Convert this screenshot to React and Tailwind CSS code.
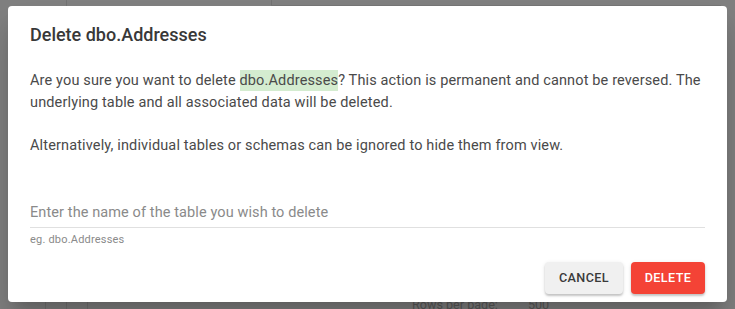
const font = { fontFamily: "Roboto, 'Liberation Sans', sans-serif" };

const Backdrop = () => (
  <div className="absolute inset-0">
    <div className="absolute left-[66px] top-0 h-[6px] w-px bg-[#737373]" />
    <div className="absolute left-[271px] top-0 h-[6px] w-px bg-[#737373]" />
    <div className="absolute left-[271px] top-[5px] h-px w-[450px] bg-[#767676]" />
    <div className="absolute left-[45px] top-[302px] h-[7px] w-px bg-[#737373]" />
    <div className="absolute left-[66px] top-[302px] h-[7px] w-px bg-[#737373]" />
    <div className="absolute left-[87px] top-[302px] h-[7px] w-px bg-[#737373]" />
    <div className="absolute left-[412px] top-[298px] flex gap-[30px] text-[12.6px] leading-[14px] text-[#5a5a5a]">
      <span>Rows per page:</span>
      <span>500</span>
    </div>
  </div>
);

const DeleteTableDialog = () => {
  return (
    <div
      className="relative w-[735px] h-[309px] overflow-hidden bg-[#808080] pt-[6px] pl-[8px]"
      style={font}
    >
      <Backdrop />

      <div className="relative w-[719px] h-[296px] bg-white rounded-[4px] shadow-[0_11px_15px_-7px_rgba(0,0,0,0.2),0_24px_38px_3px_rgba(0,0,0,0.14)] flex flex-col px-[22px]">
        <h2 className="pt-[13px] text-[18px] leading-[32px] font-medium text-[#383838]">
          Delete dbo.Addresses
        </h2>

        <p className="mt-[19px] text-[14.5px] leading-[22px] tracking-[0.14px] text-[#4a4a4a]">
          Are you sure you want to delete{" "}
          <span className="bg-[#d4ecd0] py-[2px]">dbo.Addresses</span>? This
          action is permanent and cannot be reversed. The underlying table and
          all associated data will be deleted.
        </p>

        <p className="mt-[21px] text-[14.5px] leading-[22px] tracking-[0.14px] text-[#4a4a4a]">
          Alternatively, individual tables or schemas can be ignored to hide
          them from view.
        </p>

        <div className="mt-[43px] flex flex-col">
          <input
            className="h-[28px] pb-[3px] text-[14.5px] tracking-[0.1px] text-[#333] placeholder:text-[#8a8a8a] outline-none border-b border-[#e0e0e0]"
            placeholder="Enter the name of the table you wish to delete"
          />
          <span className="mt-[4px] text-[11px] leading-[16px] tracking-[0.2px] text-[#8a8a8a]">
            eg. dbo.Addresses
          </span>
        </div>

        <div className="mt-auto mb-[8px] flex justify-end gap-[8px]">
          <button className="h-[32px] w-[78px] rounded-[4px] bg-[#f0f0f0] text-[12.6px] font-medium tracking-[0.4px] text-[#3a3a3a] shadow-[0_2px_2px_0_rgba(0,0,0,0.18),0_1px_4px_0_rgba(0,0,0,0.1)]">
            CANCEL
          </button>
          <button className="h-[32px] w-[74px] rounded-[4px] bg-[#f44336] text-[12.6px] font-medium tracking-[0.4px] text-white shadow-[0_2px_2px_0_rgba(0,0,0,0.18),0_1px_4px_0_rgba(0,0,0,0.1)]">
            DELETE
          </button>
        </div>
      </div>
    </div>
  );
};

export default function App() {
  return <DeleteTableDialog />;
}
